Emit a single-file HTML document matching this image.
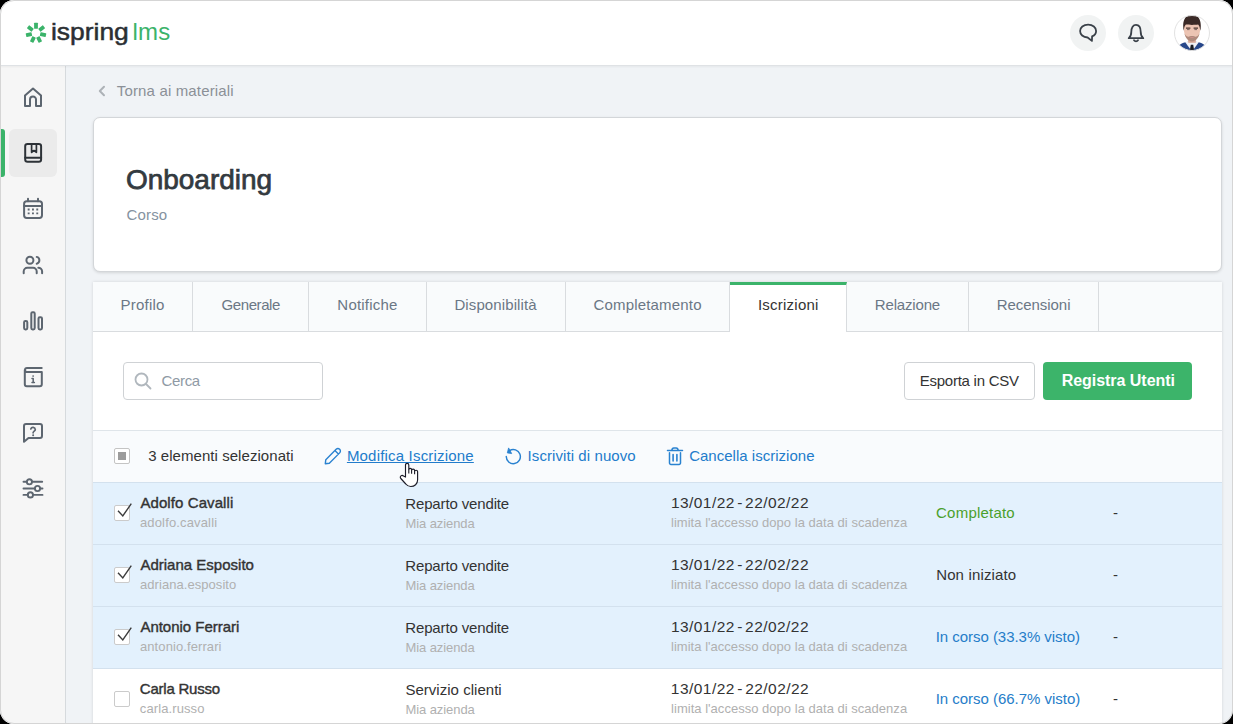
<!DOCTYPE html>
<html lang="it">
<head>
<meta charset="utf-8">
<title>Onboarding - Iscrizioni</title>
<style>
*{box-sizing:border-box;margin:0;padding:0}
html,body{width:1233px;height:724px;overflow:hidden;background:#000;}
body{font-family:"Liberation Sans",sans-serif;color:#333;}
#win{position:absolute;left:0;top:0;width:1233px;height:724px;border-radius:14px;overflow:hidden;background:#f0f3f6;}
#frame{position:absolute;left:0;top:0;width:1233px;height:724px;border-radius:14px;border:1px solid #d5d5d5;z-index:50;pointer-events:none}
#header{position:absolute;left:0;top:0;width:1233px;height:66px;background:#fff;border-bottom:1px solid #dfe2e5;box-shadow:0 1px 2px rgba(0,0,0,.05);z-index:5}
#side{position:absolute;left:0;top:66px;width:66px;height:658px;background:#f6f6f6;border-right:1px solid #d6dadd;z-index:4}
.t{position:absolute;white-space:nowrap;line-height:20px;height:20px}
svg{position:absolute;overflow:visible}
.ico{fill:none;stroke:#5d6670;stroke-width:2;stroke-linecap:round;stroke-linejoin:round}
#card{position:absolute;left:93px;top:117.400px;width:1129px;height:154.600px;background:#fff;border:1px solid #d3d6d9;border-radius:7px;box-shadow:0 1px 3px rgba(0,0,0,.12)}
#tabs{position:absolute;left:93px;top:282px;width:1129px;height:50px;background:#f9fbfc;border-bottom:1px solid #d9dcdf;}
.tab{position:absolute;top:0;height:49px;border-right:1px solid #d9dcdf;color:#6b7785;font-size:15px;line-height:45px;text-align:center}
.tab.act{background:#fff;border-top:3px solid #3bb36a;height:50px;color:#333;line-height:39px}
#panel{position:absolute;left:93px;top:332px;width:1129px;height:392px;background:#fff}
#search{position:absolute;left:123px;top:362px;width:200px;height:38px;border:1px solid #cfd2d5;border-radius:4px;background:#fff}
#csv{position:absolute;left:904px;top:362px;width:131px;height:38px;border:1px solid #cfd2d5;border-radius:4px;background:#fff}
#reg{position:absolute;left:1043px;top:362px;width:149px;height:38px;border-radius:4px;background:#3cb46a}
#bar{position:absolute;left:93px;top:430px;width:1129px;height:52px;background:#f9fbfd;border-top:1px solid #dfe5ea;}
.row{position:absolute;left:93px;width:1129px;height:62px;border-top:1px solid #d3e1ee}
.row.sel{background:#e3f1fd}
.cb{position:absolute;left:114px;width:16px;height:16px;border:1px solid #cbcbcb;border-radius:2px;background:#fff}
.nm{font-size:15px;color:#333;-webkit-text-stroke:.4px #333}
.un{font-size:13px;color:#b0b0b0}
.dp{font-size:15px;color:#333}
[id^=dt]{word-spacing:-2.4px;font-size:15.5px}
.lk{font-size:15px;color:#227ccb}
/*FIT-START*/
#bc{letter-spacing:0.155px;margin-left:-0.21px}
#ttl{letter-spacing:-0.012px;margin-left:-0.10px}
#sub{letter-spacing:0.152px;margin-left:-0.51px}
#tb0{letter-spacing:0.224px;position:relative;left:0.10px}
#tb1{letter-spacing:-0.412px;position:relative;left:0.28px}
#tb2{letter-spacing:0.215px;position:relative;left:-0.02px}
#tb3{letter-spacing:0.109px;position:relative;left:-0.44px}
#tb4{letter-spacing:0.188px;position:relative;left:0.10px}
#tb5{letter-spacing:0.245px;position:relative;left:0.30px}
#tb6{letter-spacing:-0.179px;position:relative;left:-0.09px}
#tb7{letter-spacing:-0.044px;position:relative;left:0.08px}
#cerca{letter-spacing:-0.378px;margin-left:-0.40px}
#csvt{letter-spacing:-0.240px;margin-left:-0.35px}
#regt{letter-spacing:-0.029px;margin-left:-0.37px}
#selc{letter-spacing:0.059px;margin-left:0.14px}
#l1{letter-spacing:0.187px;margin-left:-0.12px}
#l2{letter-spacing:0.081px;margin-left:-0.45px}
#l3{letter-spacing:0.019px;margin-left:-0.89px}
#n1{letter-spacing:0.090px;margin-left:0.42px}
#u1{letter-spacing:0.150px;margin-left:-0.04px}
#n2{letter-spacing:0.008px;margin-left:0.42px}
#u2{letter-spacing:0.060px;margin-left:-0.04px}
#n3{letter-spacing:-0.017px;margin-left:0.42px}
#u3{letter-spacing:0.093px;margin-left:-0.04px}
#n4{letter-spacing:-0.226px;margin-left:-0.20px}
#u4{letter-spacing:0.111px;margin-left:-0.24px}
#d1{letter-spacing:-0.139px;margin-left:0.25px}
#d2{letter-spacing:-0.139px;margin-left:0.25px}
#d3{letter-spacing:-0.139px;margin-left:0.25px}
#d4{letter-spacing:0.028px;margin-left:0.38px}
#m1{letter-spacing:-0.088px;margin-left:0.53px}
#m2{letter-spacing:-0.088px;margin-left:0.53px}
#m3{letter-spacing:-0.088px;margin-left:0.53px}
#m4{letter-spacing:-0.065px;margin-left:0.40px}
#dt1{letter-spacing:0.442px;margin-left:-0.10px}
#dt2{letter-spacing:0.442px;margin-left:-0.10px}
#dt3{letter-spacing:0.442px;margin-left:-0.10px}
#dt4{letter-spacing:0.459px;margin-left:-0.19px}
#li1{letter-spacing:0.027px;margin-left:0.00px}
#li2{letter-spacing:0.027px;margin-left:0.00px}
#li3{letter-spacing:0.027px;margin-left:0.00px}
#li4{letter-spacing:0.021px;margin-left:0.12px}
#s1{letter-spacing:0.214px;margin-left:0.09px}
#s2{letter-spacing:0.154px;margin-left:0.15px}
#s3{letter-spacing:-0.037px;margin-left:-0.31px}
#s4{letter-spacing:-0.024px;margin-left:-0.33px}
/*FIT-END*/
</style>
</head>
<body>
<div id="win">
  <div id="header"></div>
  <div id="side"></div>

  <!-- HEADER CONTENT -->
  <div id="hdrc" style="position:absolute;left:0;top:0;z-index:6">
    <svg id="logo" style="left:25px;top:22px" width="22" height="22" viewBox="-11 -11 22 22">
      <g fill="#3bb36a">
        <rect x="-1.9" y="-10.2" width="3.8" height="5.9" rx=".5"/>
        <rect x="-1.9" y="-10.2" width="3.8" height="5.9" rx=".5" transform="rotate(51.4)"/>
        <rect x="-1.9" y="-10.2" width="3.8" height="5.9" rx=".5" transform="rotate(102.8)"/>
        <rect x="-1.9" y="-10.2" width="3.8" height="5.9" rx=".5" transform="rotate(154.3)"/>
        <rect x="-1.9" y="-10.2" width="3.8" height="5.9" rx=".5" transform="rotate(205.7)"/>
        <rect x="-1.9" y="-10.2" width="3.8" height="5.9" rx=".5" transform="rotate(257.1)"/>
        <rect x="-1.9" y="-10.2" width="3.8" height="5.9" rx=".5" transform="rotate(308.6)"/>
      </g>
    </svg>
    <span class="t" id="lg1" style="left:51px;top:16.500px;font-size:24px;line-height:30px;height:30px;color:#2b2f33;-webkit-text-stroke:.5px #2b2f33;transform-origin:0 50%;transform:scaleX(1.1)">ispring</span>
    <span class="t" id="lg2" style="left:132.500px;top:16.500px;letter-spacing:.2px;font-size:24px;line-height:30px;height:30px;color:#3bb36a">lms</span>

    <div style="position:absolute;left:1070px;top:15px;width:36px;height:36px;border-radius:50%;background:#f1f3f3"></div>
    <div style="position:absolute;left:1118px;top:15px;width:36px;height:36px;border-radius:50%;background:#f1f3f3"></div>
    <svg style="left:1078px;top:23px" width="20" height="20" viewBox="0 0 20 20"><path class="ico" style="stroke:#3a4149;stroke-width:1.8" d="M10.100 1.600c4.700 0 8 2.800 8 6.300 0 2.500-1.600 4.500-4 5.500l-.200 4.500-4.300-3.400c-4.500-.100-7.500-3-7.500-6.600 0-3.500 3.300-6.300 8-6.300z"/></svg>
    <svg style="left:1126px;top:23px" width="20" height="20" viewBox="0 0 20 20"><path class="ico" style="stroke:#3a4149;stroke-width:1.8" d="M2.700 15.200c1.900-1.300 2.600-3.200 2.600-6.400 0-4.300 1.900-7 4.700-7s4.700 2.700 4.700 7c0 3.200.700 5.100 2.600 6.400z M8 17.300c.4.600 1.100 1 2 1s1.600-.4 2-1"/></svg>
    <!-- avatar -->
    <svg style="left:1174px;top:15px" width="36" height="36" viewBox="0 0 36 36">
      <defs><clipPath id="avc"><circle cx="18" cy="18" r="17.500"/></clipPath></defs>
      <circle cx="18" cy="18" r="17.500" fill="#fff"/>
      <g clip-path="url(#avc)">
        <path d="M2 36c.500-4.500 4-7.500 9.500-8.800l6.500-1.200 6.500 1.200c5.500 1.300 9 4.300 9.500 8.800z" fill="#27478a"/>
        <path d="M11.200 27.200l6.800 9.300 6.800-9.300-6.800-2.200z" fill="#f1f1f5"/>
        <path d="M16.800 29.800h2.400l1.100 6.200h-4.600z" fill="#1b1d24"/>
        <rect x="14.200" y="21" width="7.600" height="6.800" fill="#d9a997"/>
        <path d="M9.800 13.500c0-5.500 3.400-9 8.200-9s8.200 3.500 8.200 9c0 7-3.800 12.800-8.200 12.800s-8.200-5.800-8.200-12.800z" fill="#ecc4b3"/>
        <path d="M10.500 18.500c.900 4.800 4 7.900 7.500 7.900s6.600-3.100 7.500-7.900c-1.300 2.300-2.600 3.100-4.100 3.200-1.100-.900-5.700-.900-6.800 0-1.500-.100-2.800-.900-4.100-3.200z" fill="#a07c6e" opacity=".8"/>
        <path d="M15.600 22.500c1.300-.700 3.500-.700 4.800 0-1.100.800-3.700.800-4.800 0z" fill="#cf8f8a"/>
        <path d="M12 13.200h4.400M19.600 13.200h4.400" stroke="#4e3832" stroke-width="1.300"/>
        <path d="M13 14.600h2.600M20.400 14.600h2.600" stroke="#6b5a58" stroke-width=".900"/>
        <path d="M9.700 15.800c-1.800-8.800 1.100-16.300 8.300-16.800 7.200.500 10.100 8 8.300 16.800-.300-3.100-1.100-5.400-2.200-6.300-3 .500-9.200.500-12.200 0-1.100.900-1.900 3.200-2.200 6.300z" fill="#3b2a27"/>
      </g>
      <circle cx="18" cy="18" r="17.500" fill="none" stroke="#e2e2e2" stroke-width="1"/>
    </svg>
  </div>

  <!-- SIDEBAR CONTENT -->
  <div id="sidec" style="position:absolute;left:0;top:0;z-index:6">
    <div style="position:absolute;left:1px;top:129px;width:4px;height:48px;background:#3bb36a;border-radius:0 3px 3px 0"></div>
    <div style="position:absolute;left:9px;top:129px;width:48px;height:48px;background:#ebebeb;border-radius:6px"></div>
    <!-- home -->
    <svg style="left:22px;top:86px" width="22" height="22" viewBox="0 0 22 22"><path class="ico" d="M3 20V9.500L11 2.500l8 7V20h-5v-6.500a3 3 0 0 0-6 0V20z"/></svg>
    <!-- book -->
    <svg style="left:22px;top:142px" width="22" height="22" viewBox="0 0 22 22"><g class="ico" style="stroke:#2d3237"><rect x="3.200" y="2" width="15.900" height="17.700" rx="2.300"/><path d="M3.200 15.700H19.100"/><path d="M9.600 2.500V10.300L12 8.500L14.400 10.300V2.500" style="stroke-width:1.700"/></g></svg>
    <!-- calendar -->
    <svg style="left:22px;top:198px" width="22" height="22" viewBox="0 0 22 22"><g class="ico"><rect x="2.100" y="3.200" width="17.900" height="16.700" rx="2.600"/><path d="M2.100 8.100h17.900M6 .700v2.500M16 .700v2.500"/><path d="M6.600 11.500h.1M10.900 11.500h.1M15.200 11.500h.1M6.600 15.300h.1M10.900 15.300h.1M15.200 15.300h.1" style="stroke-width:1.800;stroke-linecap:square"/></g></svg>
    <!-- users -->
    <svg style="left:22px;top:254px" width="22" height="22" viewBox="0 0 22 22"><g class="ico"><circle cx="7.900" cy="6.300" r="3.500"/><path d="M1.700 19.300V17.400a3.600 3.600 0 0 1 3.600-3.600h5.800a3.600 3.600 0 0 1 3.600 3.600V19.300"/><path d="M14.700 2.900a3.500 3.500 0 0 1 0 6.800"/><path d="M16.300 13.800a3.800 3.800 0 0 1 3.800 3.600V19.300"/></g></svg>
    <!-- chart -->
    <svg style="left:22px;top:310px" width="22" height="22" viewBox="0 0 22 22"><g class="ico"><rect x="2.100" y="11" width="3.200" height="8.400" rx="1.300"/><rect x="9.300" y="2.300" width="3.400" height="17.100" rx="1.300"/><rect x="16.500" y="7.300" width="3.500" height="12.100" rx="1.300"/></g></svg>
    <!-- info book -->
    <svg style="left:22px;top:366px" width="22" height="22" viewBox="0 0 22 22"><g class="ico"><path d="M19.700 1.900H5a2 2 0 0 0 0 4h14.800v12.300a2 2 0 0 1-2 2H4.800a2 2 0 0 1-2-2V3.900"/><path d="M11.200 12.600v3.800M10 16.400h2.400M10 12.600h1.200" style="stroke-width:1.500"/><path d="M11.100 10h.1" style="stroke-width:1.700"/></g></svg>
    <!-- question -->
    <svg style="left:22px;top:422px" width="22" height="22" viewBox="0 0 22 22"><g class="ico"><path d="M2 19.800V4a2 2 0 0 1 2-2h14a2 2 0 0 1 2 2v10a2 2 0 0 1-2 2H6.500z"/><path d="M8.800 7a2.300 2.300 0 0 1 4.500.500c0 1.500-2.200 1.800-2.200 3.300" style="stroke-width:1.700"/><path d="M11.100 13.300h.1" style="stroke-width:1.900"/></g></svg>
    <!-- sliders -->
    <svg style="left:22px;top:478px" width="22" height="22" viewBox="0 0 22 22"><g class="ico" style="stroke-width:1.900"><path d="M1.500 3.800h3.200M10.200 3.800h10M1.500 10.500h11.300M18.300 10.500h2.200M1.500 16.900h4.200M11.200 16.900h9.300"/><circle cx="7.400" cy="3.800" r="2.600"/><circle cx="15.500" cy="10.500" r="2.600"/><circle cx="8.400" cy="16.900" r="2.600"/></g></svg>
  </div>

  <!-- BREADCRUMB -->
  <svg style="left:97px;top:84px" width="10" height="14" viewBox="0 0 10 14"><path d="M7 2.800L2.800 7 7 11.200" fill="none" stroke="#adb2b7" stroke-width="2" stroke-linecap="round" stroke-linejoin="round"/></svg>
  <span class="t" id="bc" style="left:117px;top:81px;font-size:15px;color:#8b9097">Torna ai materiali</span>

  <!-- CARD -->
  <div id="card"></div>
  <span class="t" id="ttl" style="left:126px;top:163px;font-size:28px;line-height:34px;height:34px;color:#333a40;-webkit-text-stroke:.75px #333a40">Onboarding</span>
  <span class="t" id="sub" style="left:127px;top:205px;font-size:15px;color:#8592a0">Corso</span>

  <!-- TABS -->
  <div style="position:absolute;left:93px;top:282px;width:1129px;height:450px;box-shadow:0 0 3px rgba(0,0,0,.13)"></div>
  <div id="tabs">
    <div class="tab" style="left:0;width:100px"><span id="tb0">Profilo</span></div>
    <div class="tab" style="left:100px;width:116px"><span id="tb1">Generale</span></div>
    <div class="tab" style="left:216px;width:118px"><span id="tb2">Notifiche</span></div>
    <div class="tab" style="left:334px;width:139px"><span id="tb3">Disponibilità</span></div>
    <div class="tab" style="left:473px;width:164px"><span id="tb4">Completamento</span></div>
    <div class="tab act" style="left:637px;width:117px"><span id="tb5">Iscrizioni</span></div>
    <div class="tab" style="left:754px;width:122px"><span id="tb6">Relazione</span></div>
    <div class="tab" style="left:876px;width:130px"><span id="tb7">Recensioni</span></div>
  </div>
  <div id="panel"></div>

  <!-- SEARCH + BUTTONS -->
  <div id="search"></div>
  <svg style="left:134px;top:372px" width="18" height="18" viewBox="0 0 18 18"><circle cx="7.500" cy="7.500" r="6" fill="none" stroke="#b0b7bd" stroke-width="1.800"/><path d="M12 12l4.500 4.500" stroke="#b0b7bd" stroke-width="1.800" stroke-linecap="round"/></svg>
  <span class="t" id="cerca" style="left:162px;top:371px;font-size:15px;color:#8f9aa5">Cerca</span>
  <div id="csv"></div>
  <span class="t" id="csvt" style="left:920px;top:371px;font-size:15px;color:#333">Esporta in CSV</span>
  <div id="reg"></div>
  <span class="t" id="regt" style="left:1062px;top:371px;font-size:16px;font-weight:bold;color:#fff">Registra Utenti</span>

  <!-- TOOLBAR -->
  <div id="bar"></div>
  <div style="position:absolute;left:114px;top:448px;width:16px;height:16px;border:1px solid #c4c4c4;border-radius:2px;background:#fff"></div>
  <div style="position:absolute;left:118px;top:452px;width:8px;height:8px;background:#9c9c9c"></div>
  <span class="t" id="selc" style="left:148px;top:446px;font-size:15px;color:#333">3 elementi selezionati</span>

  <svg style="left:324px;top:447px" width="18" height="18" viewBox="0 0 18 18"><path d="M1.300 16.700L1.800 12.660L12.130 2.330A2.500 2.500 0 0 1 15.670 5.870L5.340 16.200z M10.900 3.560L14.440 7.100" fill="none" stroke="#2a82d0" stroke-width="1.400" stroke-linejoin="round" stroke-linecap="round"/></svg>
  <span class="t lk" id="l1" style="left:347px;top:446px;text-decoration:underline;text-underline-offset:1px;text-decoration-thickness:1px">Modifica Iscrizione</span>
  <svg style="left:504px;top:447px" width="19" height="19" viewBox="0 0 19 19"><path d="M5.56 3.62A7.05 7.05 0 1 1 2.25 9.48" fill="none" stroke="#2a82d0" stroke-width="1.450" stroke-linecap="round"/><path d="M4.600 .900L3.300 5.900L7.700 6.600z" fill="#2a82d0" stroke="#2a82d0" stroke-width=".800" stroke-linejoin="round"/></svg>
  <span class="t lk" id="l2" style="left:528px;top:446px">Iscriviti di nuovo</span>
  <svg style="left:666px;top:446px" width="18" height="20" viewBox="0 0 18 20"><g fill="none" stroke="#2a82d0" stroke-width="1.500" stroke-linecap="round" stroke-linejoin="round"><path d="M1.500 4.600h15M5.800 4.400c.200-1.600.900-2.400 2-2.400h2.400c1.100 0 1.800.800 2 2.400"/><path d="M3.500 6.700V17a1.400 1.400 0 0 0 1.400 1.400h8.200A1.400 1.400 0 0 0 14.500 17V6.700"/><path d="M7.100 8.500v6.500M10.900 8.500v6.500" stroke-width="1.600"/></g></svg>
  <span class="t lk" id="l3" style="left:690px;top:446px">Cancella iscrizione</span>

  <!-- ROWS -->
  <div class="row sel" style="top:482px"></div>
  <div class="row sel" style="top:544px"></div>
  <div class="row sel" style="top:606px"></div>
  <div class="row" style="top:668px"></div>

  <div class="cb" style="top:505px"></div>
  <div class="cb" style="top:567px"></div>
  <div class="cb" style="top:629px"></div>
  <div class="cb" style="top:691px"></div>
  <svg style="left:114px;top:503px" width="20" height="18" viewBox="0 0 20 18"><path d="M4 7.800L8.800 13 17.300 .600" fill="none" stroke="#3c3c3c" stroke-width="1.400"/></svg>
  <svg style="left:114px;top:565px" width="20" height="18" viewBox="0 0 20 18"><path d="M4 7.800L8.800 13 17.300 .600" fill="none" stroke="#3c3c3c" stroke-width="1.400"/></svg>
  <svg style="left:114px;top:627px" width="20" height="18" viewBox="0 0 20 18"><path d="M4 7.800L8.800 13 17.300 .600" fill="none" stroke="#3c3c3c" stroke-width="1.400"/></svg>

  <span class="t nm" id="n1" style="left:140px;top:493px">Adolfo Cavalli</span>
  <span class="t un" id="u1" style="left:140px;top:513px">adolfo.cavalli</span>
  <span class="t nm" id="n2" style="left:140px;top:555px">Adriana Esposito</span>
  <span class="t un" id="u2" style="left:140px;top:575px">adriana.esposito</span>
  <span class="t nm" id="n3" style="left:140px;top:617px">Antonio Ferrari</span>
  <span class="t un" id="u3" style="left:140px;top:637px">antonio.ferrari</span>
  <span class="t nm" id="n4" style="left:140px;top:679px">Carla Russo</span>
  <span class="t un" id="u4" style="left:140px;top:699px">carla.russo</span>

  <span class="t dp" id="d1" style="left:405px;top:494px">Reparto vendite</span>
  <span class="t un" id="m1" style="left:405px;top:514px">Mia azienda</span>
  <span class="t dp" id="d2" style="left:405px;top:556px">Reparto vendite</span>
  <span class="t un" id="m2" style="left:405px;top:576px">Mia azienda</span>
  <span class="t dp" id="d3" style="left:405px;top:618px">Reparto vendite</span>
  <span class="t un" id="m3" style="left:405px;top:638px">Mia azienda</span>
  <span class="t dp" id="d4" style="left:405px;top:680px">Servizio clienti</span>
  <span class="t un" id="m4" style="left:405px;top:700px">Mia azienda</span>

  <span class="t dp" id="dt1" style="left:671px;top:493px">13/01/22 - 22/02/22</span>
  <span class="t un" id="li1" style="left:671px;top:513px">limita l'accesso dopo la data di scadenza</span>
  <span class="t dp" id="dt2" style="left:671px;top:555px">13/01/22 - 22/02/22</span>
  <span class="t un" id="li2" style="left:671px;top:575px">limita l'accesso dopo la data di scadenza</span>
  <span class="t dp" id="dt3" style="left:671px;top:617px">13/01/22 - 22/02/22</span>
  <span class="t un" id="li3" style="left:671px;top:637px">limita l'accesso dopo la data di scadenza</span>
  <span class="t dp" id="dt4" style="left:671px;top:679px">13/01/22 - 22/02/22</span>
  <span class="t un" id="li4" style="left:671px;top:699px">limita l'accesso dopo la data di scadenza</span>

  <span class="t dp" id="s1" style="left:936px;top:503px;color:#4aa02c">Completato</span>
  <span class="t dp" id="s2" style="left:936px;top:565px">Non iniziato</span>
  <span class="t dp" id="s3" style="left:936px;top:627px;color:#257dc9">In corso (33.3% visto)</span>
  <span class="t dp" id="s4" style="left:936px;top:689px;color:#257dc9">In corso (66.7% visto)</span>

  <span class="t dp" style="left:1113px;top:503px">-</span>
  <span class="t dp" style="left:1113px;top:565px">-</span>
  <span class="t dp" style="left:1113px;top:627px">-</span>
  <span class="t dp" style="left:1113px;top:689px">-</span>

  <!-- CURSOR -->
  <svg id="cur" style="left:399px;top:462px;z-index:40" width="20" height="26" viewBox="0 0 20 26"><path d="M6.500 15.100V2.900C6.500 1.800 7.200 1.300 8.150 1.300C9.100 1.300 9.800 1.800 9.800 2.900V7.500C9.800 6.700 10.400 6.300 11.200 6.300C12 6.300 12.600 6.700 12.600 7.600V8.300C12.600 7.500 13.300 7.100 14.100 7.100C14.900 7.100 15.600 7.500 15.600 8.400V9.300C15.600 8.600 16.300 8.200 17.100 8.200C17.900 8.200 18.600 8.700 18.600 9.600V18C18.600 22 15.500 24.500 11.800 24.500C9.500 24.500 8 23.500 6.800 22L1.800 16.500C1 15.500 1.200 14.500 2 13.900C2.800 13.300 3.800 13.400 4.500 14.100z" fill="#fff" stroke="#1c1c28" stroke-width="1.150" stroke-linejoin="round"/><path d="M9.800 7.500v4M12.600 8.300v3.500M15.600 9.300v3" stroke="#1c1c28" stroke-width="1.100" fill="none"/></svg>
</div>
<div id="frame"></div>
</body>
</html>
